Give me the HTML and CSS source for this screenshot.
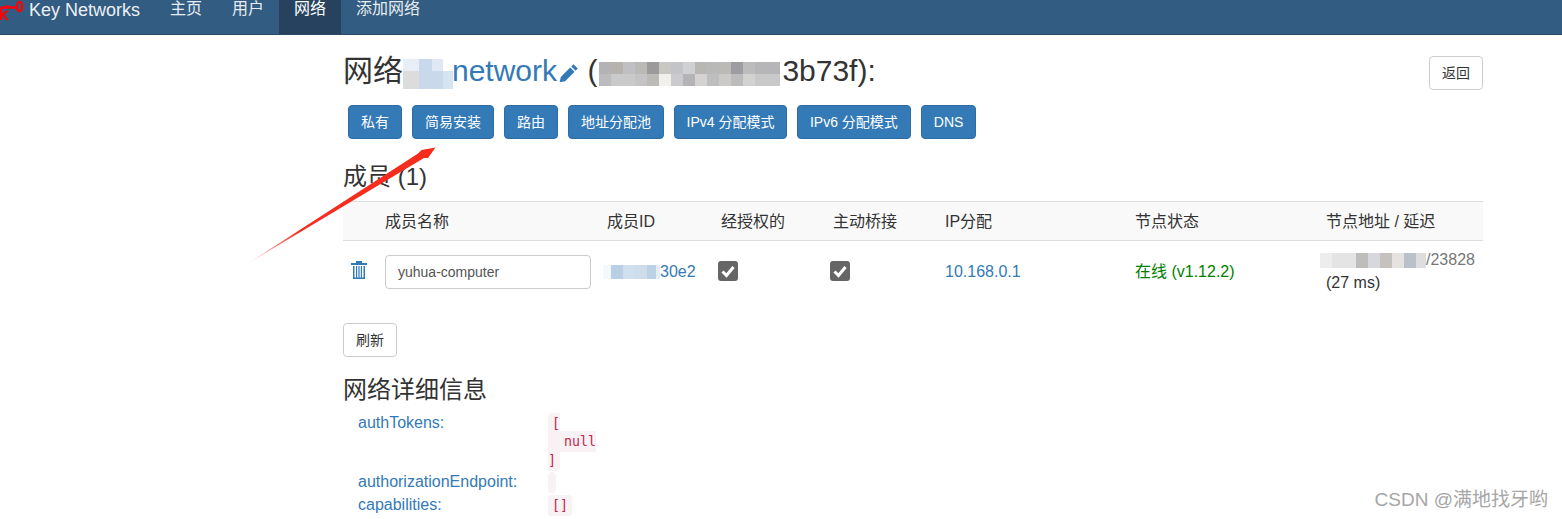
FILE: index.html
```html
<!DOCTYPE html>
<html lang="zh-CN">
<head>
<meta charset="utf-8">
<title>Key Networks</title>
<link rel="stylesheet" href="styles.css">
</head>
<body>
<nav class="navbar">
  <a class="brand">
    <svg class="key" viewBox="0 0 24 22" aria-hidden="true">
      <path d="M1 7.500H16M1 7.500V20M7 8V5" fill="none" stroke="#f00" stroke-width="2.400"/>
      <path d="M2 13.500L7.500 20M2.500 15L7.500 10.500" fill="none" stroke="#f00" stroke-width="2.200"/>
      <ellipse cx="19.500" cy="6.500" rx="2.600" ry="4.600" fill="none" stroke="#f00" stroke-width="2.400"/>
    </svg>
    <span>Key Networks</span>
  </a>
  <a class="nav-item">主页</a>
  <a class="nav-item">用户</a>
  <a class="nav-item active">网络</a>
  <a class="nav-item">添加网络</a>
</nav>

<main class="container">
  <header class="title-row">
    <h2 class="title">网络<span class="mosaic m-title"></span><a class="link net-name">network</a><svg class="pencil" viewBox="0 0 20 20" aria-hidden="true"><path d="M14.500 1.200l4.300 4.300-2.200 2.200-4.300-4.300zM11.200 4.500l4.300 4.300-9.400 9.400-5.400 1.100 1.100-5.400z" fill="#337ab7"/></svg> (<span class="mosaic m-hash"></span>3b73f):</h2>
    <button class="btn back">返回</button>
  </header>

  <div class="actions">
    <button class="btn primary">私有</button>
    <button class="btn primary">简易安装</button>
    <button class="btn primary">路由</button>
    <button class="btn primary">地址分配池</button>
    <button class="btn primary tight">IPv4 分配模式</button>
    <button class="btn primary">IPv6 分配模式</button>
    <button class="btn primary">DNS</button>
  </div>

  <h3 class="section members-title">成员 (1)</h3>

  <table class="members">
    <colgroup>
      <col class="c1"><col class="c2"><col class="c3"><col class="c4"><col class="c5"><col class="c6"><col class="c7"><col class="c8">
    </colgroup>
    <thead>
      <tr><th></th><th>成员名称</th><th>成员ID</th><th>经授权的</th><th>主动桥接</th><th>IP分配</th><th>节点状态</th><th>节点地址 / 延迟</th></tr>
    </thead>
    <tbody>
      <tr>
        <td><svg class="trash" viewBox="0 0 16 18" aria-hidden="true"><path d="M5 0h6v2h5v2H0V2h5zM2 5h12v13H2zM3.500 5v11.500h1.500V5zM6.200 5v11.500h1.200V5zM8.600 5v11.500h1.200V5zM11 5v11.500h1.500V5z" fill="#337ab7" fill-rule="evenodd"/></svg></td>
        <td><input class="name-input" value="yuhua-computer" aria-label="成员名称"></td>
        <td><a class="link"><span class="mosaic m-id"></span>30e2</a></td>
        <td><span class="check"><svg viewBox="0 0 20 20" aria-hidden="true"><path d="M4.500 10.500l4 4 7-8.500" fill="none" stroke="#fff" stroke-width="3"/></svg></span></td>
        <td><span class="check"><svg viewBox="0 0 20 20" aria-hidden="true"><path d="M4.500 10.500l4 4 7-8.500" fill="none" stroke="#fff" stroke-width="3"/></svg></span></td>
        <td><a class="link">10.168.0.1</a></td>
        <td class="online">在线 (v1.12.2)</td>
        <td class="address"><span class="muted"><span class="mosaic m-addr"></span>/23828</span><br>(27 ms)</td>
      </tr>
    </tbody>
  </table>

  <button class="btn refresh">刷新</button>

  <h3 class="section details-title">网络详细信息</h3>

  <dl class="details">
    <dt>authTokens:</dt>
    <dd><code>[
  null
]</code></dd>
    <dt>authorizationEndpoint:</dt>
    <dd><code></code></dd>
    <dt>capabilities:</dt>
    <dd><code>[]</code></dd>
  </dl>
</main>

<svg class="arrow" viewBox="0 0 1562 519" aria-hidden="true">
  <defs>
    <linearGradient id="arrow-fade" gradientUnits="userSpaceOnUse" x1="247" y1="264" x2="300" y2="231">
      <stop offset="0" stop-color="#f52c1e" stop-opacity="0.15"/>
      <stop offset="1" stop-color="#f52c1e"/>
    </linearGradient>
  </defs>
  <path d="M247 264L418 153.500L421.500 150L435.500 147.500L428 158L424 158L247 264Z" fill="url(#arrow-fade)"/>
</svg>
<div class="watermark">CSDN @满地找牙哟</div>
</body>
</html>
```
FILE: styles.css
```css
* { box-sizing: border-box; }
html, body { height: 519px; overflow: hidden; }
body {
  margin: 0;
  position: relative;
  background: #fff;
  color: #333;
  font-family: "Liberation Sans", "Noto Sans CJK SC", sans-serif;
  font-size: 16px;
  line-height: 23px;
}
.navbar {
  display: flex;
  height: 35px;
  background: #325c81;
  border-bottom: 1px solid #274a68;
}
.brand {
  display: flex;
  width: 155px;
  color: #ecf0f4;
  font-size: 18px;
  line-height: 21px;
}
.key { width: 24px; height: 22px; flex: none; margin-right: 5px; }
.nav-item {
  padding: 0 15px;
  color: #e8edf2;
  font-size: 16px;
  line-height: 17px;
}
.nav-item.active { background: #26425f; color: #fff; }

.container { width: 1140px; margin-left: 343px; }
.title-row {
  display: flex;
  justify-content: space-between;
  align-items: flex-start;
  padding-top: 21px;
}
.title {
  margin: 0;
  font-size: 30px;
  font-weight: 400;
  line-height: 30px;
  white-space: nowrap;
}
.link { color: #337ab7; text-decoration: none; }
.net-name { margin-left: -1px; }
.pencil { width: 20px; height: 20px; margin-left: 2px; vertical-align: -2px; }
.btn {
  height: 34px;
  padding: 0 12px;
  border: 1px solid #ccc;
  border-radius: 4px;
  background: #fff;
  color: #333;
  font: 14px/20px "Liberation Sans", "Noto Sans CJK SC", sans-serif;
  white-space: nowrap;
}
.primary { background: #337ab7; border-color: #2e6da4; color: #fff; }
.tight { padding: 0 11.500px; }
.actions { display: flex; gap: 10px; margin-top: 15px; padding-left: 5px; }

.section { margin: 0; font-size: 24px; font-weight: 400; line-height: 26px; }
.members-title { margin-top: 25px; }
.members {
  width: 1140px;
  margin-top: 11px;
  table-layout: fixed;
  border-collapse: collapse;
}
.c1 { width: 34px; }
.c2 { width: 222px; }
.c3 { width: 114px; }
.c4 { width: 112px; }
.c5 { width: 112px; }
.c6 { width: 190px; }
.c7 { width: 191px; }
.c8 { width: 165px; }
.members th {
  height: 39px;
  padding: 0 8px;
  background: #f9f9f9;
  border-top: 1px solid #ddd;
  border-bottom: 1px solid #ddd;
  font-weight: 400;
  text-align: left;
}
.members td { height: 60px; padding: 2px 8px 0; vertical-align: middle; white-space: nowrap; }
.members .address { padding-top: 0; }
.trash { display: block; width: 16px; height: 18px; margin-top: -4px; }
.name-input {
  display: block;
  width: 206px;
  height: 34px;
  padding: 0 12px;
  border: 1px solid #ccc;
  border-radius: 4px;
  color: #555;
  font: 14px/20px "Liberation Sans", "Noto Sans CJK SC", sans-serif;
}
.check {
  display: block;
  width: 20px;
  height: 20px;
  margin: -2px 0 0 -3px;
  border-radius: 3px;
  background: #666;
}
.check svg { display: block; width: 20px; height: 20px; }
.online { color: #008000; }
.muted { color: #777; }

.refresh { display: block; margin-top: 22px; }
.details-title { margin-top: 20px; }
.details {
  display: grid;
  grid-template-columns: 190px 1fr;
  grid-template-rows: 59px 23px 23px;
  margin: 8px 0 0;
  padding-left: 15px;
}
.details dt { font-weight: 400; color: #337ab7; }
.details dd {
  margin: 0;
  padding-top: 4px;
  font-family: "DejaVu Sans Mono", monospace;
  font-size: 13.300px;
  line-height: 18.500px;
}
code {
  padding: 3px 4px;
  border-radius: 4px;
  background: #f9f2f4;
  color: #c7254e;
  font: inherit;
  white-space: pre;
}

/* pixelated redactions in the source screenshot */
.mosaic { display: inline-block; }
.m-title {
  width: 50px;
  height: 30px;
  vertical-align: -8px;
  background:
    linear-gradient(90deg, #e8eef6 0 16px, #c7d9ea 16px 29px, #dfe8f3 29px 40px, #fff 40px) top / 100% 12px no-repeat,
    linear-gradient(90deg, #dcdcdc 0 16px, #c9d9e9 16px 40px, #d6e3f0 40px) bottom / 100% 18px no-repeat;
}
.m-hash {
  width: 186px;
  height: 24px;
  margin-left: -1px;
  vertical-align: -5px;
  background:
    linear-gradient(90deg, #fff 0 3px, #b3b3b5 3px 15px, #b6b2ad 15px 27px, #c0c0c4 27px 39px, #bbb9b5 39px 51px, #9c9a9b 51px 63px, #c9c7c4 63px 75px, #c2c4c8 75px 87px, #cfd0d2 87px 99px, #b9b7b4 99px 111px, #b9b9b9 111px 123px, #bcbab6 123px 135px, #9d9da1 135px 147px, #bcbcbc 147px 159px, #b6b6b8 159px 184px, #fff 184px) top / 100% 12px no-repeat,
    linear-gradient(90deg, #fff 0 3px, #bcbcbe 3px 15px, #cacaca 15px 39px, #c4c4c4 39px 51px, #bdbbb8 51px 63px, #f1f0ed 63px 75px, #cbcbcd 75px 87px, #b4b4b8 87px 99px, #d4d3d1 99px 111px, #bdbfbe 111px 123px, #cccac8 123px 135px, #bcbcbc 135px 147px, #d2d2d0 147px 159px, #c9c9c9 159px 184px, #fff 184px) bottom / 100% 12px no-repeat;
}
.m-id {
  width: 57px;
  height: 14px;
  margin-left: -4px;
  vertical-align: -2px;
  background: linear-gradient(90deg, #f6f9fb 0 8px, #b9cfe6 8px 20px, #d0dfee 20px 32px, #cfdcea 32px 44px, #bcd1e7 44px 53px, #e5edf5 53px);
}
.m-addr {
  width: 106px;
  height: 15px;
  margin-left: -6px;
  vertical-align: -3px;
  background: linear-gradient(90deg, #ededed 0 12px, #e4e4e4 12px 36px, #bfbcbc 36px 48px, #d6d8dc 48px 60px, #c4c1bf 60px 72px, #e6e2e0 72px 84px, #bcc0c9 84px 96px, #dddde0 96px);
}

.arrow { position: absolute; left: 0; top: 0; width: 1562px; height: 519px; pointer-events: none; }
.watermark {
  position: absolute;
  right: 14px;
  top: 488px;
  color: #a6a6a6;
  font-size: 19px;
  line-height: 24px;
}
```
